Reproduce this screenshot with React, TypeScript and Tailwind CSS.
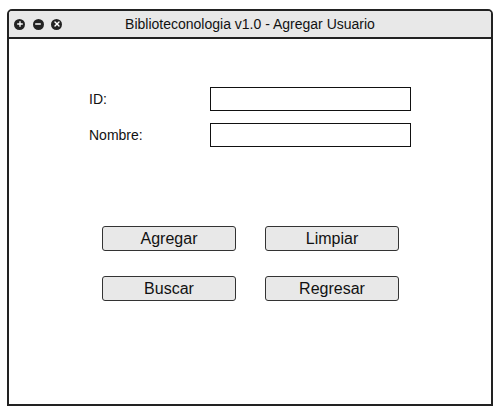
import { Plus, Minus, X } from 'lucide-react';

const font = { fontFamily: '"Liberation Sans", Arial, sans-serif' };

function Dot({ icon: Icon }: { icon: typeof Plus }) {
  return (
    <span className="flex h-[11px] w-[11px] items-center justify-center rounded-full bg-[#222]">
      <Icon size={8} strokeWidth={4} color="#fff" />
    </span>
  );
}

function Field({ label }: { label: string }) {
  return (
    <div className="flex h-[24px] items-center">
      <span className="w-[121px] text-[14px] text-[#111]">{label}</span>
      <div className="h-[24px] w-[201px] border border-[#111] bg-white" />
    </div>
  );
}

function Btn({ label }: { label: string }) {
  return (
    <button className="h-[25px] w-[134px] rounded-[3px] border border-[#333] bg-[#e8e8e8] text-[16px] leading-none text-[#111]">
      {label}
    </button>
  );
}

export default function App() {
  return (
    <div className="h-[419px] w-[501px] bg-white pl-[7px] pt-[9px]" style={font}>
      <div className="flex h-[397px] w-[486px] flex-col rounded-t-[5px] border-2 border-[#222] bg-white">
        <div className="relative flex h-[28px] items-center rounded-t-[3px] border-b-2 border-[#222] bg-[#e8e8e8]">
          <div className="flex items-center gap-[7.5px] pl-[5px]">
            <Dot icon={Plus} />
            <Dot icon={Minus} />
            <Dot icon={X} />
          </div>
          <span className="absolute left-0 right-0 text-center text-[14px] text-[#111]">
            Biblioteconologia v1.0 - Agregar Usuario
          </span>
        </div>
        <div className="flex flex-col gap-[12px] pl-[80px] pt-[48px]">
          <Field label="ID:" />
          <Field label="Nombre:" />
        </div>
        <div className="mt-[79px] grid w-fit grid-cols-2 gap-x-[29px] gap-y-[25px] pl-[93px]">
          <Btn label="Agregar" />
          <Btn label="Limpiar" />
          <Btn label="Buscar" />
          <Btn label="Regresar" />
        </div>
      </div>
    </div>
  );
}
